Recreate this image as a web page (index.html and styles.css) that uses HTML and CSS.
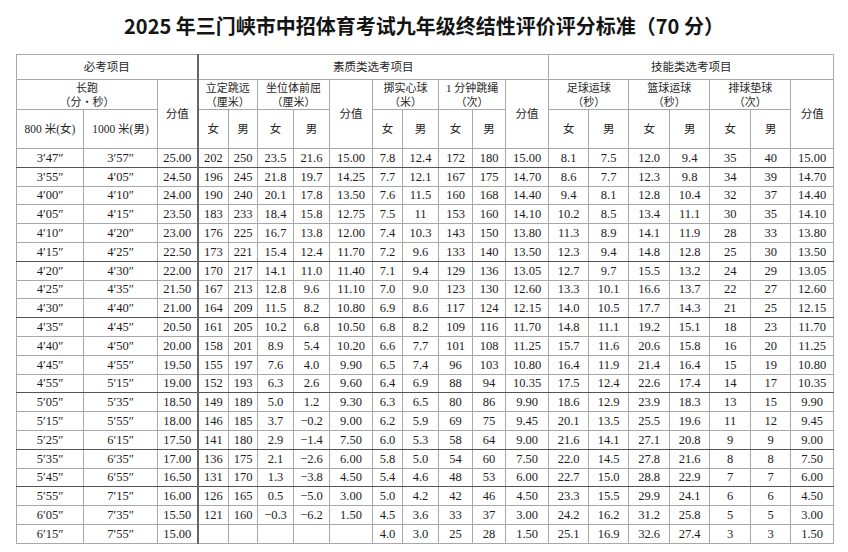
FILE: index.html
```html
<!DOCTYPE html>
<html lang="zh-CN">
<head>
<meta charset="utf-8">
<title>2025 年三门峡市中招体育考试九年级终结性评价评分标准</title>
<link rel="stylesheet" href="styles.css">
</head>
<body>
<h1 class="title">2025 年三门峡市中招体育考试九年级终结性评价评分标准（70 分）</h1>
<table class="score">
<colgroup>
<col class="w67"><col class="w74"><col class="w40">
<col class="w31"><col class="w29"><col class="w36"><col class="w36"><col class="w43">
<col class="w30"><col class="w36"><col class="w34"><col class="w33"><col class="w43">
<col class="w40"><col class="w40"><col class="w41"><col class="w40"><col class="w41"><col class="w40"><col class="w43">
</colgroup>
<thead>
<tr class="h1">
<th colspan="3">必考项目</th>
<th colspan="10" class="bl">素质类选考项目</th>
<th colspan="7">技能类选考项目</th>
</tr>
<tr class="h2">
<th colspan="2"><span class="ln">长跑</span><span class="ln">（分・秒）</span></th>
<th rowspan="2">分值</th>
<th colspan="2" class="bl"><span class="ln">立定跳远</span><span class="ln">（厘米）</span></th>
<th colspan="2"><span class="ln">坐位体前屈</span><span class="ln">（厘米）</span></th>
<th rowspan="2">分值</th>
<th colspan="2"><span class="ln">掷实心球</span><span class="ln">（米）</span></th>
<th colspan="2"><span class="ln">1 分钟跳绳</span><span class="ln">（次）</span></th>
<th rowspan="2">分值</th>
<th colspan="2"><span class="ln">足球运球</span><span class="ln">（秒）</span></th>
<th colspan="2" class="bd"><span class="ln">篮球运球</span><span class="ln">（秒）</span></th>
<th colspan="2"><span class="ln">排球垫球</span><span class="ln">（次）</span></th>
<th rowspan="2">分值</th>
</tr>
<tr class="h3">
<th>800 米(女)</th><th>1000 米(男)</th>
<th class="bl">女</th><th>男</th><th>女</th><th>男</th>
<th>女</th><th>男</th><th>女</th><th>男</th>
<th>女</th><th>男</th><th class="bd">女</th><th>男</th><th>女</th><th>男</th>
</tr>
</thead>
<tbody>
<tr class="dk"><td>3′47″</td><td>3′57″</td><td>25.00</td><td class="bl">202</td><td>250</td><td>23.5</td><td>21.6</td><td>15.00</td><td>7.8</td><td>12.4</td><td>172</td><td>180</td><td>15.00</td><td>8.1</td><td>7.5</td><td class="bd">12.0</td><td>9.4</td><td>35</td><td>40</td><td>15.00</td></tr>
<tr><td>3′55″</td><td>4′05″</td><td>24.50</td><td class="bl">196</td><td>245</td><td>21.8</td><td>19.7</td><td>14.25</td><td>7.7</td><td>12.1</td><td>167</td><td>175</td><td>14.70</td><td>8.6</td><td>7.7</td><td class="bd">12.3</td><td>9.8</td><td>34</td><td>39</td><td>14.70</td></tr>
<tr><td>4′00″</td><td>4′10″</td><td>24.00</td><td class="bl">190</td><td>240</td><td>20.1</td><td>17.8</td><td>13.50</td><td>7.6</td><td>11.5</td><td>160</td><td>168</td><td>14.40</td><td>9.4</td><td>8.1</td><td class="bd">12.8</td><td>10.4</td><td>32</td><td>37</td><td>14.40</td></tr>
<tr><td>4′05″</td><td>4′15″</td><td>23.50</td><td class="bl">183</td><td>233</td><td>18.4</td><td>15.8</td><td>12.75</td><td>7.5</td><td>11</td><td>153</td><td>160</td><td>14.10</td><td>10.2</td><td>8.5</td><td class="bd">13.4</td><td>11.1</td><td>30</td><td>35</td><td>14.10</td></tr>
<tr><td>4′10″</td><td>4′20″</td><td>23.00</td><td class="bl">176</td><td>225</td><td>16.7</td><td>13.8</td><td>12.00</td><td>7.4</td><td>10.3</td><td>143</td><td>150</td><td>13.80</td><td>11.3</td><td>8.9</td><td class="bd">14.1</td><td>11.9</td><td>28</td><td>33</td><td>13.80</td></tr>
<tr class="dk"><td>4′15″</td><td>4′25″</td><td>22.50</td><td class="bl">173</td><td>221</td><td>15.4</td><td>12.4</td><td>11.70</td><td>7.2</td><td>9.6</td><td>133</td><td>140</td><td>13.50</td><td>12.3</td><td>9.4</td><td class="bd">14.8</td><td>12.8</td><td>25</td><td>30</td><td>13.50</td></tr>
<tr><td>4′20″</td><td>4′30″</td><td>22.00</td><td class="bl">170</td><td>217</td><td>14.1</td><td>11.0</td><td>11.40</td><td>7.1</td><td>9.4</td><td>129</td><td>136</td><td>13.05</td><td>12.7</td><td>9.7</td><td class="bd">15.5</td><td>13.2</td><td>24</td><td>29</td><td>13.05</td></tr>
<tr><td>4′25″</td><td>4′35″</td><td>21.50</td><td class="bl">167</td><td>213</td><td>12.8</td><td>9.6</td><td>11.10</td><td>7.0</td><td>9.0</td><td>123</td><td>130</td><td>12.60</td><td>13.3</td><td>10.1</td><td class="bd">16.6</td><td>13.7</td><td>22</td><td>27</td><td>12.60</td></tr>
<tr class="dk"><td>4′30″</td><td>4′40″</td><td>21.00</td><td class="bl">164</td><td>209</td><td>11.5</td><td>8.2</td><td>10.80</td><td>6.9</td><td>8.6</td><td>117</td><td>124</td><td>12.15</td><td>14.0</td><td>10.5</td><td class="bd">17.7</td><td>14.3</td><td>21</td><td>25</td><td>12.15</td></tr>
<tr><td>4′35″</td><td>4′45″</td><td>20.50</td><td class="bl">161</td><td>205</td><td>10.2</td><td>6.8</td><td>10.50</td><td>6.8</td><td>8.2</td><td>109</td><td>116</td><td>11.70</td><td>14.8</td><td>11.1</td><td class="bd">19.2</td><td>15.1</td><td>18</td><td>23</td><td>11.70</td></tr>
<tr><td>4′40″</td><td>4′50″</td><td>20.00</td><td class="bl">158</td><td>201</td><td>8.9</td><td>5.4</td><td>10.20</td><td>6.6</td><td>7.7</td><td>101</td><td>108</td><td>11.25</td><td>15.7</td><td>11.6</td><td class="bd">20.6</td><td>15.8</td><td>16</td><td>20</td><td>11.25</td></tr>
<tr><td>4′45″</td><td>4′55″</td><td>19.50</td><td class="bl">155</td><td>197</td><td>7.6</td><td>4.0</td><td>9.90</td><td>6.5</td><td>7.4</td><td>96</td><td>103</td><td>10.80</td><td>16.4</td><td>11.9</td><td class="bd">21.4</td><td>16.4</td><td>15</td><td>19</td><td>10.80</td></tr>
<tr class="dk"><td>4′55″</td><td>5′15″</td><td>19.00</td><td class="bl">152</td><td>193</td><td>6.3</td><td>2.6</td><td>9.60</td><td>6.4</td><td>6.9</td><td>88</td><td>94</td><td>10.35</td><td>17.5</td><td>12.4</td><td class="bd">22.6</td><td>17.4</td><td>14</td><td>17</td><td>10.35</td></tr>
<tr><td>5′05″</td><td>5′35″</td><td>18.50</td><td class="bl">149</td><td>189</td><td>5.0</td><td>1.2</td><td>9.30</td><td>6.3</td><td>6.5</td><td>80</td><td>86</td><td>9.90</td><td>18.6</td><td>12.9</td><td class="bd">23.9</td><td>18.3</td><td>13</td><td>15</td><td>9.90</td></tr>
<tr><td>5′15″</td><td>5′55″</td><td>18.00</td><td class="bl">146</td><td>185</td><td>3.7</td><td>−0.2</td><td>9.00</td><td>6.2</td><td>5.9</td><td>69</td><td>75</td><td>9.45</td><td>20.1</td><td>13.5</td><td class="bd">25.5</td><td>19.6</td><td>11</td><td>12</td><td>9.45</td></tr>
<tr class="dk"><td>5′25″</td><td>6′15″</td><td>17.50</td><td class="bl">141</td><td>180</td><td>2.9</td><td>−1.4</td><td>7.50</td><td>6.0</td><td>5.3</td><td>58</td><td>64</td><td>9.00</td><td>21.6</td><td>14.1</td><td class="bd">27.1</td><td>20.8</td><td>9</td><td>9</td><td>9.00</td></tr>
<tr><td>5′35″</td><td>6′35″</td><td>17.00</td><td class="bl">136</td><td>175</td><td>2.1</td><td>−2.6</td><td>6.00</td><td>5.8</td><td>5.0</td><td>54</td><td>60</td><td>7.50</td><td>22.0</td><td>14.5</td><td class="bd">27.8</td><td>21.6</td><td>8</td><td>8</td><td>7.50</td></tr>
<tr class="dk"><td>5′45″</td><td>6′55″</td><td>16.50</td><td class="bl">131</td><td>170</td><td>1.3</td><td>−3.8</td><td>4.50</td><td>5.4</td><td>4.6</td><td>48</td><td>53</td><td>6.00</td><td>22.7</td><td>15.0</td><td class="bd">28.8</td><td>22.9</td><td>7</td><td>7</td><td>6.00</td></tr>
<tr><td>5′55″</td><td>7′15″</td><td>16.00</td><td class="bl">126</td><td>165</td><td>0.5</td><td>−5.0</td><td>3.00</td><td>5.0</td><td>4.2</td><td>42</td><td>46</td><td>4.50</td><td>23.3</td><td>15.5</td><td class="bd">29.9</td><td>24.1</td><td>6</td><td>6</td><td>4.50</td></tr>
<tr><td>6′05″</td><td>7′35″</td><td>15.50</td><td class="bl">121</td><td>160</td><td>−0.3</td><td>−6.2</td><td>1.50</td><td>4.5</td><td>3.6</td><td>33</td><td>37</td><td>3.00</td><td>24.2</td><td>16.2</td><td class="bd">31.2</td><td>25.8</td><td>5</td><td>5</td><td>3.00</td></tr>
<tr><td>6′15″</td><td>7′55″</td><td>15.00</td><td class="bl"></td><td></td><td></td><td></td><td></td><td>4.0</td><td>3.0</td><td>25</td><td>28</td><td>1.50</td><td>25.1</td><td>16.9</td><td class="bd">32.6</td><td>27.4</td><td>3</td><td>3</td><td>1.50</td></tr>
</tbody>
</table>
</body>
</html>
```
FILE: styles.css
```css
html, body {
  margin: 0;
  padding: 0;
  background: #ffffff;
}

body {
  font-family: "Liberation Serif", "Noto Sans CJK SC", serif;
  color: #1c1c1c;
}

.title {
  margin: 14px 0 16px;
  text-align: center;
  font-family: "Noto Sans CJK SC", sans-serif;
  font-weight: 700;
  font-size: 20px;
  line-height: 24px;
  color: #141414;
}

.score {
  margin-left: 16px;
  width: 817px;
  table-layout: fixed;
  border-collapse: collapse;
  border: 1px solid #555;
}

.w67 { width: 67px; }
.w74 { width: 74px; }
.w40 { width: 40px; }
.w31 { width: 31px; }
.w29 { width: 29px; }
.w36 { width: 36px; }
.w43 { width: 43px; }
.w30 { width: 30px; }
.w34 { width: 34px; }
.w33 { width: 33px; }
.w41 { width: 41px; }

.score th,
.score td {
  border: 1px solid #a8a8a8;
  padding: 0;
  text-align: center;
  vertical-align: middle;
  overflow: hidden;
  white-space: nowrap;
}

.score th {
  font-family: "Liberation Serif", "Noto Sans CJK SC", serif;
  font-weight: 400;
  font-size: 11.5px;
  line-height: 14px;
  color: #262626;
}

.score .ln {
  display: block;
  font-size: 11px;
  line-height: 14px;
}

.score td {
  font-size: 12.5px;
  line-height: 14px;
  height: 17.8px;
}

.score .h1 th { height: 24px; }
.score .h2 th { height: 29px; }
.score .h3 th { height: 38px; }

.score .bl { border-left: 2px solid #666; }
.score .bd { border-left: 1px solid #444; }

.score tbody tr.dk td { border-bottom: 1px solid #555; }
```
